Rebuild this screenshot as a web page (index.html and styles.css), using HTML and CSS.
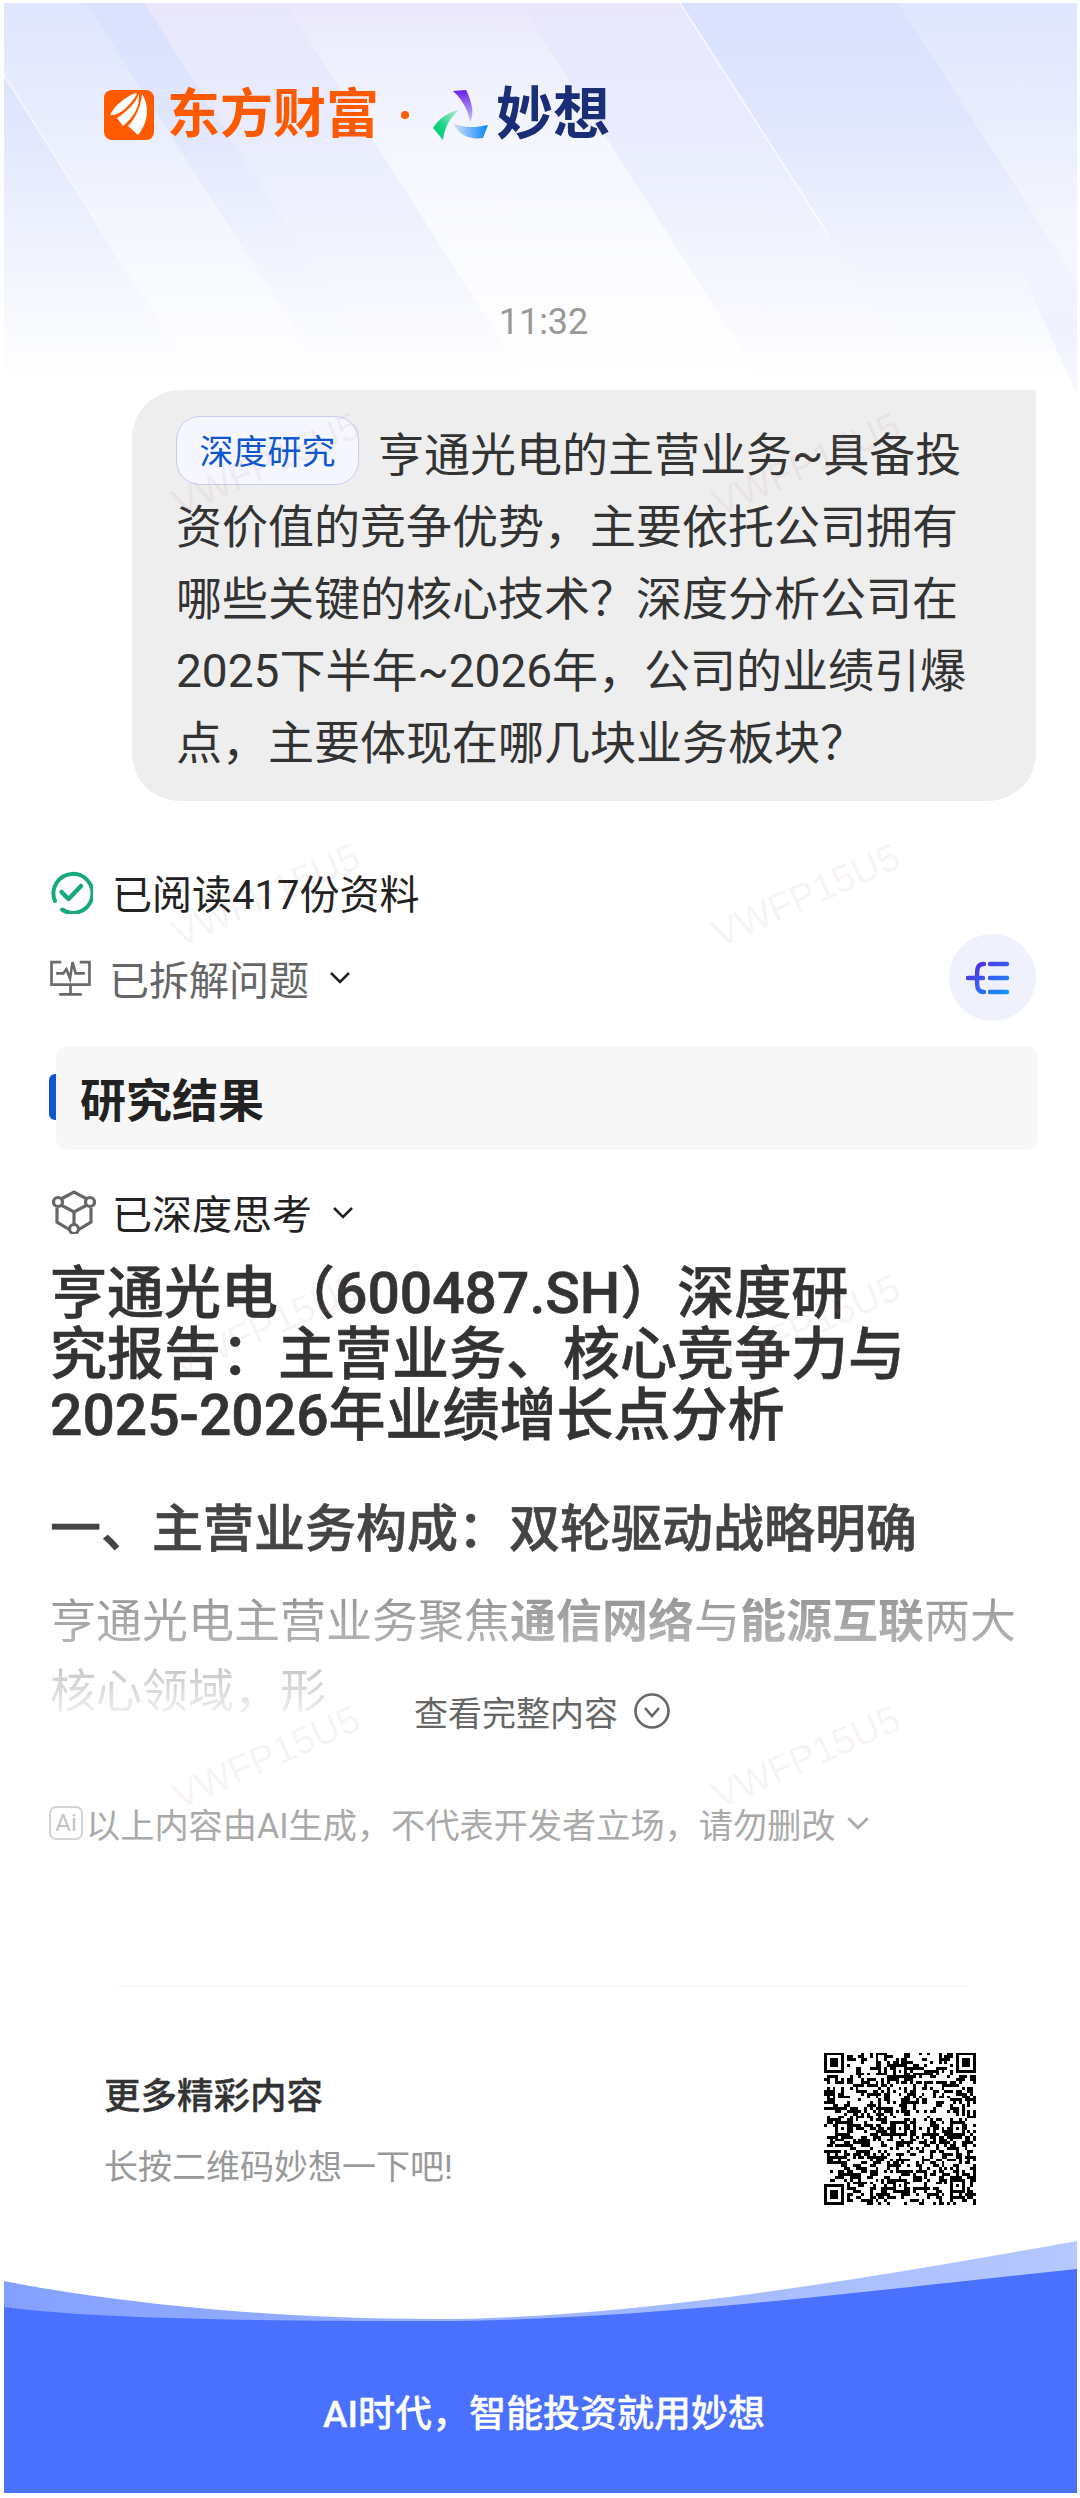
FILE: index.html
```html
<!DOCTYPE html>
<html lang="zh-CN">
<head>
<meta charset="utf-8">
<title>妙想</title>
<link rel="stylesheet" href="styles.css">
</head>
<body>
<main class="sheet">
  <svg class="backdrop" viewBox="0 0 1073 420" preserveAspectRatio="none" aria-hidden="true">
    <defs>
      <linearGradient id="bgTint" x1="0" y1="0" x2="0" y2="1">
        <stop offset="0" stop-color="#d9e1fe"/>
        <stop offset=".3" stop-color="#e1e7fd"/>
        <stop offset=".6" stop-color="#f1f4fe"/>
        <stop offset=".9" stop-color="#ffffff"/>
      </linearGradient>
      <linearGradient id="lilac" x1="0" y1="0" x2="0" y2="1">
        <stop offset="0" stop-color="#eee8fb" stop-opacity=".75"/>
        <stop offset=".4" stop-color="#f6f6fe" stop-opacity=".3"/>
        <stop offset="1" stop-color="#ffffff" stop-opacity="0"/>
      </linearGradient>
      <linearGradient id="sheen" x1="0" y1="0" x2="0" y2="1">
        <stop offset="0" stop-color="#fff" stop-opacity=".08"/>
        <stop offset=".35" stop-color="#fff" stop-opacity=".55"/>
        <stop offset=".7" stop-color="#fff" stop-opacity=".7"/>
      </linearGradient>
      <linearGradient id="sheenSoft" x1="0" y1="0" x2="0" y2="1">
        <stop offset="0" stop-color="#fff" stop-opacity=".15"/>
        <stop offset=".5" stop-color="#fff" stop-opacity=".38"/>
        <stop offset="1" stop-color="#fff" stop-opacity=".5"/>
      </linearGradient>
      <linearGradient id="corner" x1="0" y1="0" x2="0" y2="1">
        <stop offset="0" stop-color="#eef2fe" stop-opacity="0"/>
        <stop offset=".55" stop-color="#eff2fe"/>
        <stop offset="1" stop-color="#f8f9ff"/>
      </linearGradient>
    </defs>
    <rect width="1073" height="420" fill="url(#bgTint)"/>
    <polygon points="140,0 676,0 945,420 409,420" fill="url(#lilac)"/>
    <polygon points="281,0 516,0 785,420 550,420" fill="url(#sheen)"/>
    <polygon points="-48,0 82,0 351,420 221,420" fill="url(#sheenSoft)"/>
    <polygon points="894,0 1300,0 1569,420 1163,420" fill="url(#sheenSoft)"/>
    <line x1="676" y1="0" x2="825" y2="233" stroke="#fff" stroke-width="1.600" stroke-opacity=".7"/>
    <line x1="-1" y1="70" x2="141" y2="297" stroke="#fff" stroke-width="2" stroke-opacity=".4"/>
    <polygon points="1005,240 1073,240 1073,392" fill="url(#corner)"/>
  </svg>

  <header class="brand">
    <svg class="brand-mark" viewBox="0 0 50 50" aria-hidden="true">
      <rect width="50" height="50" rx="8" fill="#ff5a00"/>
      <path d="M31 3C20 8 11 15 6 25C15 26 25 17 33 4Z" fill="#fff"/>
      <path d="M35 4C31 14 22 22 13 28L19 36C29 28 36 17 35 4Z" fill="#fff"/>
      <path d="M38 4C37 17 31 29 24 36L34 45C43 34 47 18 38 4Z" fill="#fff"/>
    </svg>
    <span class="brand-east">东方财富</span>
    <span class="brand-dot"></span>
    <svg class="brand-blades" viewBox="0 0 55 50" aria-hidden="true">
      <defs>
        <linearGradient id="bladeP" x1="0" y1="0" x2="0" y2="1"><stop offset="0" stop-color="#6a1fe8"/><stop offset="1" stop-color="#cfd0f4"/></linearGradient>
        <linearGradient id="bladeG" x1="1" y1="0" x2="0" y2="1"><stop offset="0" stop-color="#c4ecd9"/><stop offset=".6" stop-color="#12d483"/><stop offset="1" stop-color="#05c878"/></linearGradient>
        <linearGradient id="bladeB" x1="0" y1="0" x2="1" y2="0"><stop offset="0" stop-color="#d5e4f6"/><stop offset="1" stop-color="#0a84ff"/></linearGradient>
      </defs>
      <path d="M20 1L33 0C38 10 42 22 37 33C36 22 30 10 20 1Z" fill="url(#bladeP)"/>
      <path d="M26 20C14 22 5 30 0 38L10 50C11 40 16 28 26 20Z" fill="url(#bladeG)"/>
      <path d="M20 33C28 38 42 38 55 35L50 48C38 50 26 46 20 33Z" fill="url(#bladeB)"/>
    </svg>
    <span class="brand-miao">妙想</span>
  </header>

  <p class="time">11:32</p>

  <section class="bubble">
    <div class="bubble-text"><span class="tag">深度研究</span>亨通光电的主营业务~具备投资价值的竞争优势，主要依托公司拥有哪些关键的核心技术？深度分析公司在2025下半年~2026年，公司的业绩引爆点，主要体现在哪几块业务板块？</div>
  </section>

  <div class="status status-read">
    <svg class="icon-check" viewBox="0 0 44 44" aria-hidden="true">
      <path d="M6 31A19.5 19.5 0 1 1 13 39.5" fill="none" stroke="#18a97f" stroke-width="4" stroke-linecap="round"/>
      <path d="M12.5 22L19.5 29L32 16" fill="none" stroke="#18a97f" stroke-width="4.500" stroke-linecap="round" stroke-linejoin="round"/>
    </svg>
    <span>已阅读417份资料</span>
  </div>

  <div class="status status-split">
    <svg class="icon-monitor" viewBox="0 0 40 36" aria-hidden="true">
      <path d="M11 3H1.500V25H38.500V3H29M6 14H13L16 10L19.500 19L22 3L25 14H34M20 25V34M9 34.500H31" fill="none" stroke="#6a6a6a" stroke-width="2.600"/>
    </svg>
    <span>已拆解问题</span>
    <svg class="chevron" viewBox="0 0 22 13" aria-hidden="true"><path d="M2 2L11 11L20 2"/></svg>
    <span class="outline-btn">
      <svg viewBox="0 0 44 34" aria-hidden="true">
        <defs><linearGradient id="outlineGrad" x1="0" y1="0" x2="1" y2="1"><stop offset="0" stop-color="#5a27df"/><stop offset="1" stop-color="#1690ff"/></linearGradient></defs>
        <path d="M24 3H41M24 17H41M24 31H41M18 3C11 3 11 8 11 17C11 26 11 31 18 31M2 17H17" fill="none" stroke="url(#outlineGrad)" stroke-width="4.400" stroke-linecap="round"/>
      </svg>
    </span>
  </div>

  <div class="result-box"><span class="result-bar"></span>研究结果</div>

  <div class="status status-think">
    <svg class="icon-cube" viewBox="0 0 44 44" aria-hidden="true">
      <g fill="none" stroke="#666" stroke-width="3.200">
        <path d="M9 9L22 2L35 9M5 18V32L18 40M39 18V32L26 40M9 15L22 22L35 15M22 22V36"/>
        <circle cx="6" cy="12" r="4.500"/><circle cx="38" cy="12" r="4.500"/><circle cx="22" cy="39" r="4.500"/>
      </g>
    </svg>
    <span>已深度思考</span>
    <svg class="chevron" viewBox="0 0 22 13" aria-hidden="true"><path d="M2 2L11 11L20 2"/></svg>
  </div>

  <h1 class="title">亨通光电（600487.SH）深度研<br>究报告：主营业务、核心竞争力与<br>2025-2026年业绩增长点分析</h1>
  <h2 class="subtitle">一、主营业务构成：双轮驱动战略明确</h2>
  <p class="excerpt">亨通光电主营业务聚焦<strong>通信网络</strong>与<strong>能源互联</strong>两大核心领域，形</p>

  <div class="more-link">
    <span>查看完整内容</span>
    <svg class="icon-circle-down" viewBox="0 0 36 36" aria-hidden="true">
      <circle cx="18" cy="18" r="16.500"/><path d="M11 15L18 23L25 15"/>
    </svg>
  </div>

  <div class="disclaimer">
    <span class="ai-badge">Ai</span>
    <span>以上内容由AI生成，不代表开发者立场，请勿删改</span>
    <svg class="chevron chevron-pale" viewBox="0 0 22 13" aria-hidden="true"><path d="M2 2L11 11L20 2"/></svg>
  </div>

  <div class="divider"></div>

  <section class="promo">
    <div>
      <p class="promo-title">更多精彩内容</p>
      <p class="promo-sub">长按二维码妙想一下吧!</p>
    </div>
    <svg id="qr" class="qr" viewBox="0 0 53 53" shape-rendering="crispEdges" aria-label="二维码"></svg>
  </section>

  <footer class="footer">
    <svg class="wave" viewBox="0 0 1073 252" preserveAspectRatio="none" aria-hidden="true">
      <defs><linearGradient id="waveLight" x1="0" y1="0" x2="1" y2="0"><stop offset="0" stop-color="#84a0ff"/><stop offset="1" stop-color="#b6c8ff"/></linearGradient></defs>
      <path d="M0 40C90 58 250 78 430 78C620 78 850 40 1073 0V252H0Z" fill="url(#waveLight)"/>
      <path d="M0 66C90 78 250 80 430 80C620 80 820 55 1073 28V252H0Z" fill="#4a70ff"/>
    </svg>
    <p class="slogan">AI时代，智能投资就用妙想</p>
  </footer>

  <div class="watermarks" aria-hidden="true">
    <span>VWFP15U5</span><span>VWFP15U5</span>
    <span>VWFP15U5</span><span>VWFP15U5</span>
    <span>VWFP15U5</span><span>VWFP15U5</span>
    <span>VWFP15U5</span><span>VWFP15U5</span>
  </div>
</main>
<script src="script.js"></script>
</body>
</html>
```
FILE: styles.css
```css
* { box-sizing: border-box; }
html, body { margin: 0; padding: 0; background: #fff; }
body {
  width: 1080px;
  height: 2498px;
  padding: 3px 3px 4px 4px;
  overflow: hidden;
  font-family: Roboto, "Noto Sans CJK SC", "Noto Sans", sans-serif;
  color: #333;
}
p, h1, h2 { margin: 0; }

.sheet { position: relative; width: 1073px; height: 2491px; overflow: hidden; background: #fff; }
.sheet > * { position: relative; }
.sheet > .backdrop { position: absolute; left: 0; top: 0; width: 1073px; height: 420px; }

/* brand */
.brand { display: flex; align-items: center; height: 50px; margin-top: 87px; padding-left: 100px; }
.brand-mark { width: 50px; height: 50px; flex: none; }
.brand-east { margin-left: 13px; font-size: 53px; line-height: 50px; font-weight: 700; color: #ff5a00; white-space: nowrap; }
.brand-dot { width: 8px; height: 8px; margin-left: 22px; border-radius: 50%; background: #ff5a00; }
.brand-blades { width: 55px; height: 50px; margin-left: 24px; flex: none; }
.brand-miao { margin-left: 8px; font-size: 57px; line-height: 50px; font-weight: 700; color: #1a2e78; white-space: nowrap; }

.time { margin-top: 162px; padding-left: 6px; height: 39px; font-size: 36px; line-height: 40px; text-align: center; color: #999; }

/* question */
.bubble { width: 904px; height: 411px; margin: 49px 0 0 128px; padding: 29px 0 0 44px; background: #eee; border-radius: 48px 0 48px 48px; }
.bubble-text { width: 800px; font-size: 46px; line-height: 72px; color: #333; }
.tag {
  display: inline-flex; align-items: center; justify-content: center;
  width: 183px; height: 69px; margin: -3px 19px 0 0; padding-top: 2px; vertical-align: top;
  font-size: 34px; line-height: 1; color: #0f57d0;
  background: #f5f6ff; border: 1.500px solid #c8ccf4; border-radius: 24px;
}

/* status rows */
.status { display: flex; align-items: center; padding-left: 45px; font-size: 40px; color: #222; }
.status-read { height: 50px; margin-top: 67px; padding-bottom: 2px; }
.status-split { height: 87px; margin-top: 16px; color: #666; }
.status-think { height: 50px; margin-top: 38px; padding-bottom: 2px; }
.icon-check { width: 44px; height: 44px; margin-right: 19px; flex: none; }
.icon-monitor { width: 41px; height: 37px; margin: 0 18px 0 1px; flex: none; }
.icon-cube { width: 44px; height: 44px; margin: 0 16px 0 3px; flex: none; }
.chevron { width: 22px; height: 13px; margin-left: 20px; flex: none; }
.chevron path { fill: none; stroke: #222; stroke-width: 2.600; }
.chevron-pale { width: 24px; height: 14px; margin-left: 10px; }
.chevron-pale path { stroke: #aaa; }
.outline-btn { display: flex; align-items: center; justify-content: center; width: 87px; height: 87px; margin: 0 41px 0 auto; border-radius: 50%; background: #eff2fd; }
.outline-btn svg { width: 44px; height: 34px; margin-right: 9px; }

/* result heading */
.result-box {
  display: flex; align-items: center; width: 982px; height: 104px; margin: 25px 0 0 52px; padding: 0 0 3px 24px;
  font-size: 46px; font-weight: 700; color: #222; background: #f7f7f7; border-radius: 12px;
}
.result-bar { position: absolute; left: -7px; top: 28px; width: 7px; height: 46px; background: #0f57d0; border-radius: 6px 0 0 6px; }

/* article */
.title { margin-top: 25px; padding-left: 46px; font-size: 57px; line-height: 61px; font-weight: 500; color: #333; -webkit-text-stroke: .6px #333; }
.subtitle { margin-top: 49px; padding-left: 46px; font-size: 51px; line-height: 70px; font-weight: 500; color: #444; -webkit-text-stroke: .6px #444; }
.excerpt {
  width: 1030px; height: 140px; margin-top: 21px; padding-left: 46px; font-size: 46px; line-height: 70px; color: #333;
  -webkit-mask-image: linear-gradient(rgba(0,0,0,.55), rgba(0,0,0,.32) 50%, rgba(0,0,0,.02) 100%);
  mask-image: linear-gradient(rgba(0,0,0,.55), rgba(0,0,0,.32) 50%, rgba(0,0,0,.02) 100%);
}
.excerpt strong { font-weight: 700; }
.more-link { display: flex; align-items: center; justify-content: center; gap: 16px; height: 40px; margin-top: -35px; padding-left: 3px; font-size: 34px; color: #666; }
.icon-circle-down { width: 36px; height: 36px; flex: none; fill: none; stroke: #666; stroke-width: 2.600; }

.disclaimer { display: flex; align-items: center; height: 34px; margin-top: 75px; padding-left: 45px; font-size: 34.200px; color: #aaa; }
.ai-badge { display: flex; align-items: center; justify-content: center; width: 34px; height: 34px; margin-right: 3px; font-size: 24px; line-height: 1; color: #c4c4c4; border: 2px solid #d4d4d4; border-radius: 7px; }

.divider { width: 853px; height: 1px; margin: 146px 0 0 113px; background: #f5f5f5; }

/* promo */
.promo { display: flex; justify-content: space-between; margin-top: 65px; padding: 0 101px 0 100px; }
.promo-title { margin-top: 20px; font-size: 36.500px; line-height: 50px; font-weight: 500; color: #333; -webkit-text-stroke: .3px #333; }
.promo-sub { margin-top: 20px; font-size: 34px; line-height: 50px; color: #999; }
.qr { display: block; width: 152px; height: 153px; flex: none; }

/* footer */
.footer { height: 252px; margin-top: 36px; padding-top: 149px; }
.wave { position: absolute; left: 0; top: 0; width: 1073px; height: 252px; }
.slogan { position: relative; padding-left: 7px; font-size: 37px; line-height: 50px; font-weight: 500; text-align: center; color: #fff; -webkit-text-stroke: .3px #fff; }

/* watermark */
.sheet > .watermarks {
  position: absolute; left: -8px; top: 246px;
  display: grid; grid-template-columns: 540px 540px; grid-auto-rows: 431px;
  pointer-events: none;
}
.watermarks span {
  display: flex; align-items: center; justify-content: center;
  font-family: "Liberation Sans", sans-serif; font-size: 38px;
  color: rgba(180, 120, 140, .09);
  transform: rotate(-24deg);
}
```
FILE: script.js
```js
// Draws the QR code: fixed finder/alignment patterns plus a seeded module fill.
(function () {
  var n = 53, grid = [], seed = 20250611;
  function rnd() { seed = (seed * 1664525 + 1013904223) >>> 0; return (seed >>> 16) / 65536; }
  for (var y = 0; y < n; y++) {
    grid[y] = [];
    for (var x = 0; x < n; x++) {
      var r = rnd();
      var up = y ? grid[y - 1][x] : 0, left = x ? grid[y][x - 1] : 0;
      grid[y][x] = r < 0.36 + 0.1 * up + 0.1 * left ? 1 : 0;
    }
  }
  function clear(x0, y0, w, h) {
    for (var y = y0; y < y0 + h; y++) for (var x = x0; x < x0 + w; x++) {
      if (grid[y] && x >= 0 && x < n) grid[y][x] = 0;
    }
  }
  function fill(x0, y0, w, h) {
    for (var y = y0; y < y0 + h; y++) for (var x = x0; x < x0 + w; x++) grid[y][x] = 1;
  }
  function finder(x0, y0) {
    clear(x0 - 1, y0 - 1, 9, 9);
    fill(x0, y0, 7, 7); clear(x0 + 1, y0 + 1, 5, 5); fill(x0 + 2, y0 + 2, 3, 3);
  }
  function align(x0, y0) {
    fill(x0, y0, 5, 5); clear(x0 + 1, y0 + 1, 3, 3); fill(x0 + 2, y0 + 2, 1, 1);
  }
  finder(0, 0); finder(n - 7, 0); finder(0, n - 7);
  [24, 44].forEach(function (c) { [4, 24, 44].forEach(function (d) {
    if (!(c === 44 && d === 4)) align(d, c);
  }); });
  align(24, 4);
  var d = '';
  for (var j = 0; j < n; j++) for (var i = 0; i < n; i++) {
    if (grid[j][i]) d += 'M' + i + ' ' + j + 'h1v1h-1z';
  }
  var p = document.createElementNS('http://www.w3.org/2000/svg', 'path');
  p.setAttribute('d', d);
  p.setAttribute('fill', '#000');
  document.getElementById('qr').appendChild(p);
})();
```
